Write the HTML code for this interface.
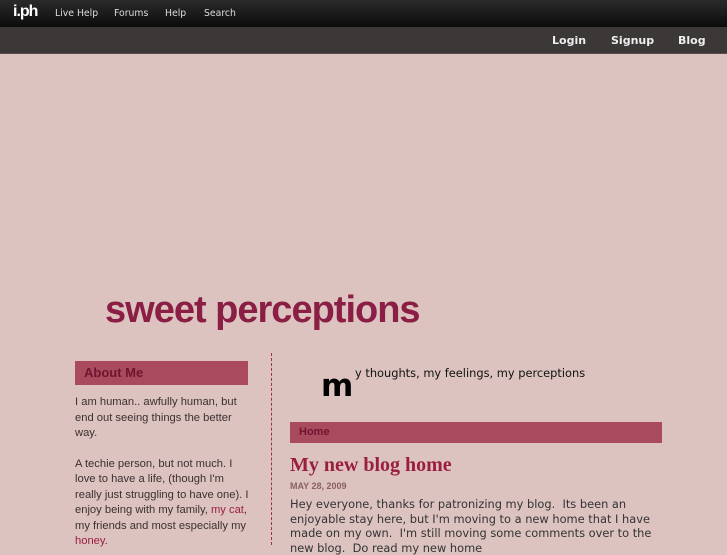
<!DOCTYPE html>
<html><head><meta charset="utf-8"><style>
*{margin:0;padding:0;box-sizing:border-box}
body{width:727px;height:545px;overflow:hidden;background:#dcc3c0;font-family:"Liberation Sans",sans-serif;position:relative}
.top{position:absolute;left:0;top:0;width:727px;height:27px;background:linear-gradient(#2a2a2a,#0c0c0c)}
.top .logo{position:absolute;left:13px;top:3px;color:#fff;font-weight:bold;font-size:16px;letter-spacing:-1px}
.top a{position:absolute;top:8px;color:#ddd;font-size:9.3px;font-family:"DejaVu Sans",sans-serif}
.bar2{position:absolute;left:0;top:27px;width:727px;height:27px;background:#3d3838;border-bottom:1px solid #5a4c4c}
.bar2 a{position:absolute;top:7px;color:#eee;font-size:11px;font-weight:bold;font-family:"DejaVu Sans",sans-serif}
.title{position:absolute;left:105px;top:289px;font-size:38px;font-weight:bold;color:#8a1e44;letter-spacing:-1px}
.side{position:absolute;left:75px;top:361px;width:175px}
.hd{width:173px;background:#a94a5e;color:#70152f;font-weight:bold;font-size:13px;height:24px;line-height:23px;padding-left:9px}
.side p{font-size:11.2px;line-height:15.5px;color:#3a3030;margin-top:10px}
.side p+p{margin-top:15px}
.lnk{color:#9a1e44}
.dash{position:absolute;left:271px;top:353px;height:192px;border-left:1px dashed #a0304a}
.tag{position:absolute;left:355px;top:366px;font-family:"DejaVu Sans",sans-serif;font-size:11.4px;color:#111}
.bigm{position:absolute;left:321px;top:368px;font-family:"DejaVu Sans",sans-serif;font-weight:bold;font-size:31px;color:#000}
.home{position:absolute;left:290px;top:422px;width:372px;height:21px;background:#a94a5e;color:#70152f;font-weight:bold;font-size:11px;line-height:20px;padding-left:9px}
.ptitle{position:absolute;left:290px;top:454px;font-family:"Liberation Serif",serif;font-weight:bold;font-size:20px;color:#9a1e3e}
.date{position:absolute;left:290px;top:481px;font-size:9px;font-weight:bold;color:#8a6060}
.body{position:absolute;left:290px;top:497px;width:380px;font-family:"DejaVu Sans",sans-serif;font-size:11.4px;line-height:14.5px;color:#333}
</style></head><body>
<div class="top"><span class="logo">i.ph</span>
<a style="left:55px">Live Help</a><a style="left:114px">Forums</a><a style="left:165px">Help</a><a style="left:204px">Search</a></div>
<div class="bar2"><a style="left:552px">Login</a><a style="left:611px">Signup</a><a style="left:678px">Blog</a></div>
<div class="title">sweet perceptions</div>
<div class="side"><div class="hd">About Me</div>
<p>I am human.. awfully human, but end out seeing things the better way.</p>
<p>A techie person, but not much. I love to have a life, (though I'm really just struggling to have one). I enjoy being with my family, <span class="lnk">my cat</span>, my friends and most especially my <span class="lnk">honey</span>.</p></div>
<div class="dash"></div>
<div class="bigm">m</div>
<div class="tag">y thoughts, my feelings, my perceptions</div>
<div class="home">Home</div>
<div class="ptitle">My new blog home</div>
<div class="date">MAY 28, 2009</div>
<div class="body">Hey everyone, thanks for patronizing my blog.&nbsp; Its been an enjoyable stay here, but I'm moving to a new home that I have made on my own.&nbsp; I'm still moving some comments over to the new blog.&nbsp; Do read my new home</div>
</body></html>
